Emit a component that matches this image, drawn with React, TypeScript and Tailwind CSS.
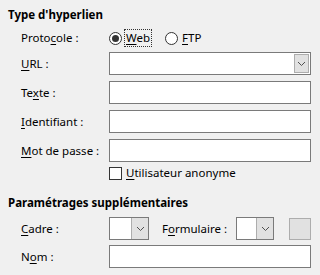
import type { ReactNode } from "react";

// Underlined mnemonic letter, like a dialog accelerator key
const U = ({ children }: { children: ReactNode }) => (
  <span className="underline underline-offset-[2px] decoration-[1px]">{children}</span>
);

const Chevron = () => (
  <svg width="9" height="6" viewBox="0 0 9 6" className="text-[#505050]">
    <path d="M1 1 L4.5 4.5 L8 1" fill="none" stroke="currentColor" strokeWidth="1" />
  </svg>
);

const Field = ({ label, children }: { label: ReactNode; children?: ReactNode }) => (
  <div className="flex items-center">
    <div className="w-[88px] shrink-0">{label}</div>
    {children ?? <div className="h-[23px] w-[202px] border border-[#7a7a7a] bg-white" />}
  </div>
);

const Combo = ({ width }: { width: string }) => (
  <div className={`flex h-[23px] ${width} border border-[#7a7a7a] bg-white`}>
    <div className="flex-1" />
    <div className="flex w-[17px] items-center justify-center border-l border-[#adadad] bg-[#e1e1e1]">
      <Chevron />
    </div>
  </div>
);

export default function App() {
  return (
    <div className="h-[275px] w-[320px] overflow-hidden bg-[#f0f0f0] font-['Segoe_UI','Noto_Sans',sans-serif] text-[11.5px] leading-[16px] text-black">
      {/* Type d'hyperlien */}
      <div className="pl-[8px] pt-[7px] font-bold">Type d'hyperlien</div>

      <div className="mt-[7px] flex flex-col gap-[6px] pl-[21px]">
        <div className="flex h-[16px] items-center">
          <div className="w-[88px] shrink-0">
            Proto<U>c</U>ole :
          </div>
          <label className="flex items-center gap-[3px]">
            <span className="flex h-[13px] w-[13px] items-center justify-center rounded-full border border-[#333] bg-white">
              <span className="h-[7px] w-[7px] rounded-full bg-[#333]" />
            </span>
            <span className="px-[1px] outline-dotted outline-1 outline-[#333]">
              <U>W</U>eb
            </span>
          </label>
          <label className="ml-[14px] flex items-center gap-[4px]">
            <span className="h-[13px] w-[13px] rounded-full border border-[#333] bg-white" />
            <span>
              <U>F</U>TP
            </span>
          </label>
        </div>

        <Field
          label={
            <>
              <U>U</U>RL :
            </>
          }
        >
          <div className="flex h-[23px] w-[202px] border border-[#7a7a7a] bg-white">
            <div className="flex-1" />
            <div className="m-[1px] flex w-[15px] items-center justify-center border border-[#adadad] bg-[#e1e1e1]">
              <Chevron />
            </div>
          </div>
        </Field>
        <Field
          label={
            <>
              Te<U>x</U>te :
            </>
          }
        />
        <Field
          label={
            <>
              <U>I</U>dentifiant :
            </>
          }
        />
        <Field
          label={
            <>
              <U>M</U>ot de passe :
            </>
          }
        />
        <div className="mt-[-3px] flex items-center pl-[88px]">
          <span className="h-[13px] w-[13px] border border-[#333] bg-white" />
          <span className="ml-[4px]">
            <U>U</U>tilisateur anonyme
          </span>
        </div>
      </div>

      {/* Paramétrages supplémentaires */}
      <div className="mt-[14px] pl-[8px] font-bold">Paramétrages supplémentaires</div>

      <div className="mt-[6px] flex flex-col gap-[5px] pl-[21px]">
        <div className="flex items-center">
          <div className="w-[88px] shrink-0">
            <U>C</U>adre :
          </div>
          <Combo width="w-[40px]" />
          <div className="ml-[13px] w-[74px]">
            F<U>o</U>rmulaire :
          </div>
          <Combo width="w-[38px]" />
          <div className="ml-[15px] h-[22px] w-[22px] border border-[#adadad] bg-[#e1e1e1]" />
        </div>
        <Field
          label={
            <>
              N<U>o</U>m :
            </>
          }
        />
      </div>
    </div>
  );
}
